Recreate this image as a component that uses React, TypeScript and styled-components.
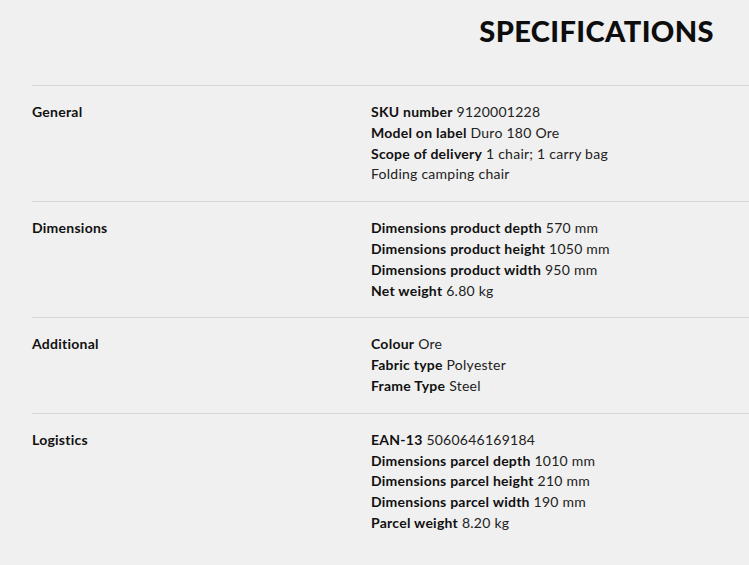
import React from "react";
import styled, { createGlobalStyle } from "styled-components";

const Global = createGlobalStyle`
  html, body { margin: 0; padding: 0; background: #f0f0f0; }
  body { font-family: "Lato", "Noto Sans", sans-serif; color: #111; }
`;

const Page = styled.div`
  width: 749px;
  height: 565px;
  overflow: hidden;
  background: #f0f0f0;
  padding-left: 32px;
  box-sizing: border-box;
`;

const Header = styled.div`
  display: flex;
  justify-content: flex-end;
  padding: 13px 35px 0 0;
  height: 85px;
  box-sizing: border-box;
`;

const Title = styled.h2`
  margin: 0;
  font-family: "Lato", sans-serif;
  font-weight: 900;
  font-size: 29px;
  line-height: 36px;
  letter-spacing: 0.4px;
  color: #0d0d0d;
`;

const Section = styled.section`
  display: grid;
  grid-template-columns: 339px 1fr;
  border-top: 1px solid #d6d6d6;
  padding: 16px 0 16px;
`;

const Label = styled.div`
  font-weight: 700;
  font-size: 14px;
  line-height: 20.8px;
  letter-spacing: 0.25px;
  color: #111;
`;

const Values = styled.div`
  display: flex;
  flex-direction: column;
`;

const Line = styled.div`
  font-size: 14px;
  line-height: 20.8px;
  letter-spacing: 0.25px;
  color: #222;
  white-space: nowrap;
`;

const Key = styled.b`
  font-weight: 700;
  color: #111;
`;

type Row = { k?: string; v: string };
type Group = { title: string; rows: Row[] };

const groups: Group[] = [
  {
    title: "General",
    rows: [
      { k: "SKU number", v: "9120001228" },
      { k: "Model on label", v: "Duro 180 Ore" },
      { k: "Scope of delivery", v: "1 chair; 1 carry bag" },
      { v: "Folding camping chair" },
    ],
  },
  {
    title: "Dimensions",
    rows: [
      { k: "Dimensions product depth", v: "570 mm" },
      { k: "Dimensions product height", v: "1050 mm" },
      { k: "Dimensions product width", v: "950 mm" },
      { k: "Net weight", v: "6.80 kg" },
    ],
  },
  {
    title: "Additional",
    rows: [
      { k: "Colour", v: "Ore" },
      { k: "Fabric type", v: "Polyester" },
      { k: "Frame Type", v: "Steel" },
    ],
  },
  {
    title: "Logistics",
    rows: [
      { k: "EAN-13", v: "5060646169184" },
      { k: "Dimensions parcel depth", v: "1010 mm" },
      { k: "Dimensions parcel height", v: "210 mm" },
      { k: "Dimensions parcel width", v: "190 mm" },
      { k: "Parcel weight", v: "8.20 kg" },
    ],
  },
];

export default function App() {
  return (
    <Page>
      <Global />
      <Header>
        <Title>SPECIFICATIONS</Title>
      </Header>
      {groups.map((g) => (
        <Section key={g.title}>
          <Label>{g.title}</Label>
          <Values>
            {g.rows.map((r, i) => (
              <Line key={i}>
                {r.k ? <Key>{r.k}</Key> : null}
                {r.k ? " " : ""}
                {r.v}
              </Line>
            ))}
          </Values>
        </Section>
      ))}
    </Page>
  );
}
